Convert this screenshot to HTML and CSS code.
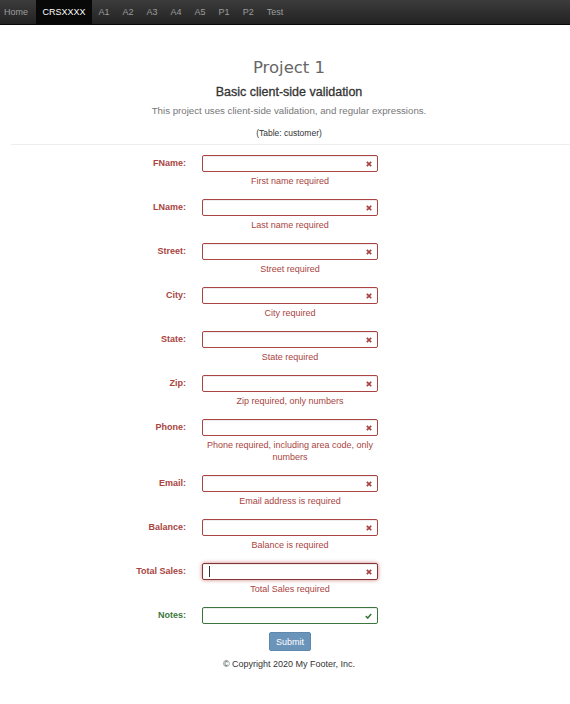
FILE: index.html
```html
<!DOCTYPE html>
<html>
<head>
<meta charset="utf-8">
<title>Project 1</title>
<link rel="stylesheet" href="styles.css">
</head>
<body>
<nav class="navbar">
  <a class="nav-brand" href="#">Home</a>
  <a class="nav-item active" href="#">CRSXXXX</a>
  <a class="nav-item" href="#">A1</a>
  <a class="nav-item" href="#">A2</a>
  <a class="nav-item" href="#">A3</a>
  <a class="nav-item" href="#">A4</a>
  <a class="nav-item" href="#">A5</a>
  <a class="nav-item" href="#">P1</a>
  <a class="nav-item" href="#">P2</a>
  <a class="nav-item" href="#">Test</a>
</nav>
<main class="container">
  <header class="page-header">
    <h1 class="title">Project 1</h1>
    <h2 class="subtitle">Basic client-side validation</h2>
    <p class="lead">This project uses client-side validation, and regular expressions.</p>
    <p class="table-note">(Table: customer)</p>
  </header>
  <hr class="divider">
  <form class="form">
    <div class="row error">
      <label class="label">FName:</label>
      <div class="field">
        <div class="input"><span class="icon"><svg viewBox="0 0 6 6" width="6" height="6"><path d="M0.8 0.8 L5.2 5.2 M5.2 0.8 L0.8 5.2" stroke="currentColor" stroke-width="1.7"/></svg></span></div>
        <div class="help">First name required</div>
      </div>
    </div>
    <div class="row error">
      <label class="label">LName:</label>
      <div class="field">
        <div class="input"><span class="icon"><svg viewBox="0 0 6 6" width="6" height="6"><path d="M0.8 0.8 L5.2 5.2 M5.2 0.8 L0.8 5.2" stroke="currentColor" stroke-width="1.7"/></svg></span></div>
        <div class="help">Last name required</div>
      </div>
    </div>
    <div class="row error">
      <label class="label">Street:</label>
      <div class="field">
        <div class="input"><span class="icon"><svg viewBox="0 0 6 6" width="6" height="6"><path d="M0.8 0.8 L5.2 5.2 M5.2 0.8 L0.8 5.2" stroke="currentColor" stroke-width="1.7"/></svg></span></div>
        <div class="help">Street required</div>
      </div>
    </div>
    <div class="row error">
      <label class="label">City:</label>
      <div class="field">
        <div class="input"><span class="icon"><svg viewBox="0 0 6 6" width="6" height="6"><path d="M0.8 0.8 L5.2 5.2 M5.2 0.8 L0.8 5.2" stroke="currentColor" stroke-width="1.7"/></svg></span></div>
        <div class="help">City required</div>
      </div>
    </div>
    <div class="row error">
      <label class="label">State:</label>
      <div class="field">
        <div class="input"><span class="icon"><svg viewBox="0 0 6 6" width="6" height="6"><path d="M0.8 0.8 L5.2 5.2 M5.2 0.8 L0.8 5.2" stroke="currentColor" stroke-width="1.7"/></svg></span></div>
        <div class="help">State required</div>
      </div>
    </div>
    <div class="row error">
      <label class="label">Zip:</label>
      <div class="field">
        <div class="input"><span class="icon"><svg viewBox="0 0 6 6" width="6" height="6"><path d="M0.8 0.8 L5.2 5.2 M5.2 0.8 L0.8 5.2" stroke="currentColor" stroke-width="1.7"/></svg></span></div>
        <div class="help">Zip required, only numbers</div>
      </div>
    </div>
    <div class="row error">
      <label class="label">Phone:</label>
      <div class="field">
        <div class="input"><span class="icon"><svg viewBox="0 0 6 6" width="6" height="6"><path d="M0.8 0.8 L5.2 5.2 M5.2 0.8 L0.8 5.2" stroke="currentColor" stroke-width="1.7"/></svg></span></div>
        <div class="help">Phone required, including area code, only numbers</div>
      </div>
    </div>
    <div class="row error">
      <label class="label">Email:</label>
      <div class="field">
        <div class="input"><span class="icon"><svg viewBox="0 0 6 6" width="6" height="6"><path d="M0.8 0.8 L5.2 5.2 M5.2 0.8 L0.8 5.2" stroke="currentColor" stroke-width="1.7"/></svg></span></div>
        <div class="help">Email address is required</div>
      </div>
    </div>
    <div class="row error">
      <label class="label">Balance:</label>
      <div class="field">
        <div class="input"><span class="icon"><svg viewBox="0 0 6 6" width="6" height="6"><path d="M0.8 0.8 L5.2 5.2 M5.2 0.8 L0.8 5.2" stroke="currentColor" stroke-width="1.7"/></svg></span></div>
        <div class="help">Balance is required</div>
      </div>
    </div>
    <div class="row error">
      <label class="label">Total Sales:</label>
      <div class="field">
        <div class="input focus"><span class="caret"></span><span class="icon"><svg viewBox="0 0 6 6" width="6" height="6"><path d="M0.8 0.8 L5.2 5.2 M5.2 0.8 L0.8 5.2" stroke="currentColor" stroke-width="1.7"/></svg></span></div>
        <div class="help">Total Sales required</div>
      </div>
    </div>
    <div class="row success">
      <label class="label">Notes:</label>
      <div class="field">
        <div class="input"><span class="icon"><svg viewBox="0 0 7 6" width="7" height="6"><path d="M0.8 3.2 L2.7 5 L6.2 1" stroke="currentColor" stroke-width="1.6" fill="none"/></svg></span></div>
      </div>
    </div>
    <div class="actions">
      <button class="btn" type="button">Submit</button>
    </div>
  </form>
  <footer class="footer">© Copyright 2020 My Footer, Inc.</footer>
</main>
</body>
</html>
```
FILE: styles.css
```css
html, body {
  margin: 0;
  padding: 0;
  background: #fff;
  font-family: "Liberation Sans", Arial, sans-serif;
  color: #333;
  overflow: hidden;
}

.navbar {
  display: flex;
  align-items: stretch;
  height: 25px;
  background: linear-gradient(to bottom, #3c3c3c 0%, #222 100%);
  border-bottom: 1px solid #080808;
  box-sizing: border-box;
}

.nav-brand, .nav-item {
  display: flex;
  align-items: center;
  font-size: 9px;
  color: #9d9d9d;
  text-decoration: none;
}

.nav-brand {
  padding: 0 8px 0 4px;
}

.nav-item {
  padding: 0 6.5px;
}

.nav-item.active {
  background: #080808;
  color: #fff;
}

.container {
  margin-left: 11px;
  width: 559px;
}

.page-header {
  text-align: center;
  width: 556px;
}

.title {
  margin: 32px 0 0;
  font-family: "DejaVu Sans", sans-serif;
  font-size: 16.5px;
  line-height: 22px;
  font-weight: normal;
  color: #666;
}

.subtitle {
  margin: 5px 0 0;
  font-size: 12.5px;
  line-height: 16px;
  font-weight: normal;
  -webkit-text-stroke: 0.3px #333;
  color: #333;
}

.lead {
  margin: 4px 0 0;
  font-size: 9.7px;
  line-height: 14px;
  color: #777;
}

.table-note {
  margin: 9px 0 0;
  font-size: 8.5px;
  line-height: 12px;
  color: #333;
}

.divider {
  margin: 5px 0 0;
  border: 0;
  border-top: 1px solid #eee;
  height: 0;
}

.form {
  margin-top: 10px;
  margin-left: -11px;
}

.row {
  display: grid;
  grid-template-columns: 186px 176px;
  column-gap: 16px;
  margin-bottom: 12px;
}

.label {
  text-align: right;
  font-size: 9px;
  font-weight: bold;
  height: 17px;
  line-height: 17px;
}

.input {
  height: 17px;
  box-sizing: border-box;
  border: 1px solid;
  border-radius: 2px;
  display: flex;
  align-items: center;
  justify-content: flex-end;
  padding: 0 5px 0 6px;
  box-shadow: inset 0 1px 1px rgba(0,0,0,0.075);
  background: #fff;
}

.icon {
  display: flex;
}

.caret {
  width: 1px;
  height: 11px;
  background: #333;
  margin-right: auto;
}

.help {
  margin-top: 3px;
  text-align: center;
  font-size: 9px;
  line-height: 12px;
}

.error .label, .error .help, .error .icon {
  color: #a94442;
}

.error .input {
  border-color: #a94442;
}

.error .input.focus {
  border-color: #843534;
  box-shadow: inset 0 1px 1px rgba(0,0,0,0.075), 0 0 4px #ce8483;
}

.success .label, .success .icon {
  color: #3c763d;
}

.success .input {
  border-color: #3c763d;
}

.success {
  margin-bottom: 8px;
}

.actions {
  display: grid;
  grid-template-columns: 186px 176px;
  column-gap: 16px;
}

.btn {
  grid-column: 2;
  justify-self: center;
  width: 42px;
  height: 19px;
  padding: 0;
  border: 1px solid #5f88ad;
  border-radius: 2px;
  background: #6a94b9;
  color: #fff;
  font-family: "Liberation Sans", Arial, sans-serif;
  font-size: 9px;
}

.footer {
  margin-top: 7px;
  margin-left: -11px;
  width: 578px;
  text-align: center;
  font-size: 9px;
  line-height: 12px;
  color: #333;
}
```
